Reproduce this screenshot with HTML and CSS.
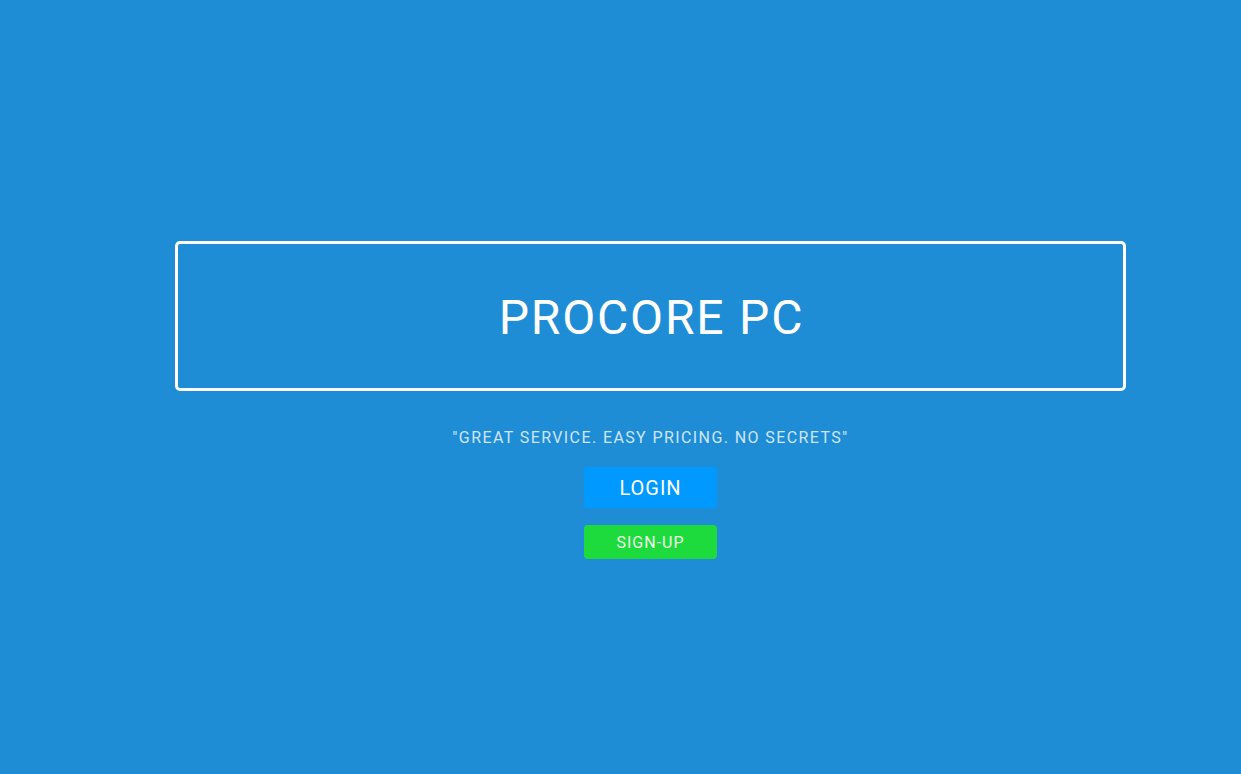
FILE: index.html
```html
<!DOCTYPE html>
<html>
<head>
<meta charset="utf-8">
<link rel="stylesheet" href="styles.css">
</head>
<body>
<main class="page">
  <section class="hero">
    <div class="title-box">
      <h1 class="title">PROCORE PC</h1>
    </div>
    <p class="tagline">"GREAT SERVICE. EASY PRICING. NO SECRETS"</p>
    <a class="btn btn-login" href="#">LOGIN</a>
    <a class="btn btn-signup" href="#">SIGN-UP</a>
  </section>
</main>
</body>
</html>
```

FILE: styles.css
```css
html, body {
  margin: 0;
  padding: 0;
  height: 100%;
}
body {
  background: #1e8dd6;
  font-family: "Roboto", "Liberation Sans", sans-serif;
}
.page {
  padding-top: 241px;
  padding-left: 175px;
}
.hero {
  width: 951px;
  display: flex;
  flex-direction: column;
  align-items: center;
}
.title-box {
  box-sizing: border-box;
  width: 951px;
  height: 150px;
  border: 3px solid #ffffff;
  border-radius: 5px;
  display: flex;
  align-items: center;
  justify-content: center;
}
.title {
  margin: 0;
  color: #ffffff;
  font-weight: 400;
  font-size: 48px;
  letter-spacing: 1.8px;
  line-height: 1;
  padding-top: 4px;
  padding-left: 2px;
}
.tagline {
  margin: 38px 0 0;
  color: #cfe5f6;
  font-size: 16px;
  letter-spacing: 1.4px;
  line-height: 18px;
}
.btn {
  display: flex;
  align-items: center;
  justify-content: center;
  width: 133px;
  border-radius: 4px;
  text-decoration: none;
  color: #ffffff;
}
.btn-login {
  margin-top: 20px;
  height: 41px;
  background: #0099ff;
  font-size: 20px;
  letter-spacing: 1px;
}
.btn-signup {
  margin-top: 17px;
  height: 34px;
  background: #1ddb3c;
  font-size: 16px;
  letter-spacing: 1px;
  color: #eefde9;
}
```
